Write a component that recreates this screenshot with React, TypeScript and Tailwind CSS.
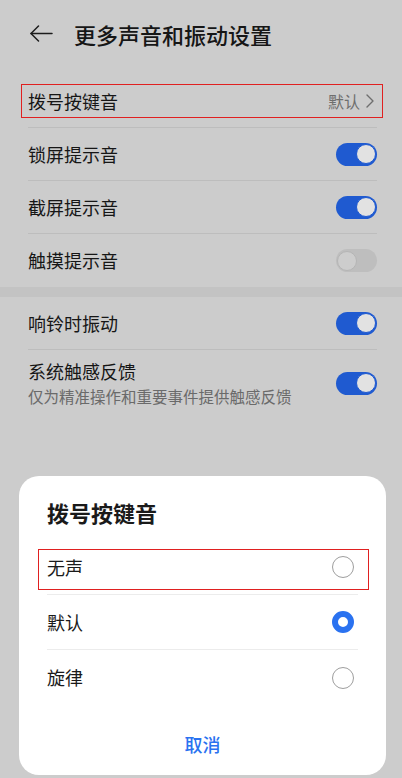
import React from 'react';

const FONT = { fontFamily: '"Noto Sans CJK SC", "Noto Sans", sans-serif' };

function Toggle({ on }: { on: boolean }) {
  return on ? (
    <div className="w-[41px] h-[23px] rounded-full bg-[#1f5ad0] flex items-center justify-end pr-[1px]">
      <div className="w-[20px] h-[20px] rounded-full bg-[#e2e2e2] border-[1.5px] border-[#1f5ad0]" />
    </div>
  ) : (
    <div className="w-[41px] h-[23px] rounded-full bg-[#bebebe] flex items-center justify-start pl-[1px]">
      <div className="w-[20px] h-[20px] rounded-full bg-[#cdcdcd] border border-[#b5b5b5]" />
    </div>
  );
}

function Row({ label, on, last }: { label: string; on: boolean; last?: boolean }) {
  return (
    <div className={`h-[53px] flex items-center justify-between ${last ? '' : 'border-b border-[#bdbdbd]'}`}>
      <span className="text-[18px] text-[#161616]">{label}</span>
      <Toggle on={on} />
    </div>
  );
}

function Radio({ checked }: { checked: boolean }) {
  return checked ? (
    <div className="w-[22px] h-[22px] rounded-full border-[6px] border-[#2a72f0] bg-white" />
  ) : (
    <div className="w-[22px] h-[22px] rounded-full border border-[#9e9e9e] bg-white" />
  );
}

export default function App() {
  return (
    <div className="relative w-[402px] h-[778px] overflow-hidden bg-[#cccccc]" style={FONT}>
      {/* Header */}
      <div className="h-[75px] flex items-center pl-[30px] pb-[8px]">
        <svg width="23" height="17" viewBox="0 0 23 17" fill="none" stroke="#1c1c1c" strokeWidth="1.5" strokeLinecap="round" strokeLinejoin="round">
          <path d="M22 8.5H1" />
          <path d="M8.5 1L1 8.5 8.5 16" />
        </svg>
        <h1 className="ml-[21px] text-[22px] font-medium text-[#161616] leading-none">更多声音和振动设置</h1>
      </div>

      {/* Section 1 */}
      <div className="pl-[28px] pr-[25px]">
        <div className="relative h-[53px] flex items-center justify-between border-b border-[#bdbdbd]">
          <div className="absolute left-[-7px] right-[-6px] top-[9px] bottom-[9px] border border-[#e02020]" />
          <span className="text-[18px] text-[#161616]">拨号按键音</span>
          <div className="flex items-center gap-[6px] pr-[3px]">
            <span className="text-[16px] text-[#6e6e6e]">默认</span>
            <svg width="8" height="14" viewBox="0 0 8 14" fill="none" stroke="#6e6e6e" strokeWidth="1.4" strokeLinecap="round" strokeLinejoin="round">
              <path d="M1 1l6 6-6 6" />
            </svg>
          </div>
        </div>
        <Row label="锁屏提示音" on />
        <Row label="截屏提示音" on />
        <Row label="触摸提示音" on={false} last />
      </div>

      <div className="h-[10px] bg-[#c3c3c3]" />

      {/* Section 2 */}
      <div className="pl-[28px] pr-[25px]">
        <Row label="响铃时振动" on />
        <div className="h-[66px] flex items-center justify-between">
          <div className="flex flex-col">
            <span className="text-[18px] text-[#161616] leading-[24px]">系统触感反馈</span>
            <span className="text-[15.5px] text-[#6a6a6a] leading-[22px] mt-[2px]">仅为精准操作和重要事件提供触感反馈</span>
          </div>
          <Toggle on />
        </div>
      </div>

      {/* Dialog */}
      <div className="absolute left-[19px] top-[476px] w-[367px] h-[299px] rounded-[20px] bg-white flex flex-col">
        <div className="h-[64px] flex items-start pl-[28px] pt-[24px]">
          <h2 className="text-[22px] font-bold text-[#1a1a1a] leading-[24px]">拨号按键音</h2>
        </div>
        <div className="px-[28px]">
          <div className="relative h-[55px] flex items-center justify-between border-b border-[#ececec]">
            <div className="absolute left-[-9px] right-[-11px] top-[9px] bottom-[4px] border border-[#e02020]" />
            <span className="text-[18px] text-[#1a1a1a]">无声</span>
            <div className="mr-[4px]"><Radio checked={false} /></div>
          </div>
          <div className="h-[55px] flex items-center justify-between border-b border-[#ececec]">
            <span className="text-[18px] text-[#1a1a1a]">默认</span>
            <div className="mr-[4px]"><Radio checked /></div>
          </div>
          <div className="h-[55px] flex items-center justify-between">
            <span className="text-[18px] text-[#1a1a1a]">旋律</span>
            <div className="mr-[4px]"><Radio checked={false} /></div>
          </div>
        </div>
        <div className="flex-1 flex items-center justify-center pt-[8px]">
          <span className="text-[18px] font-medium text-[#2a72f0]">取消</span>
        </div>
      </div>
    </div>
  );
}
